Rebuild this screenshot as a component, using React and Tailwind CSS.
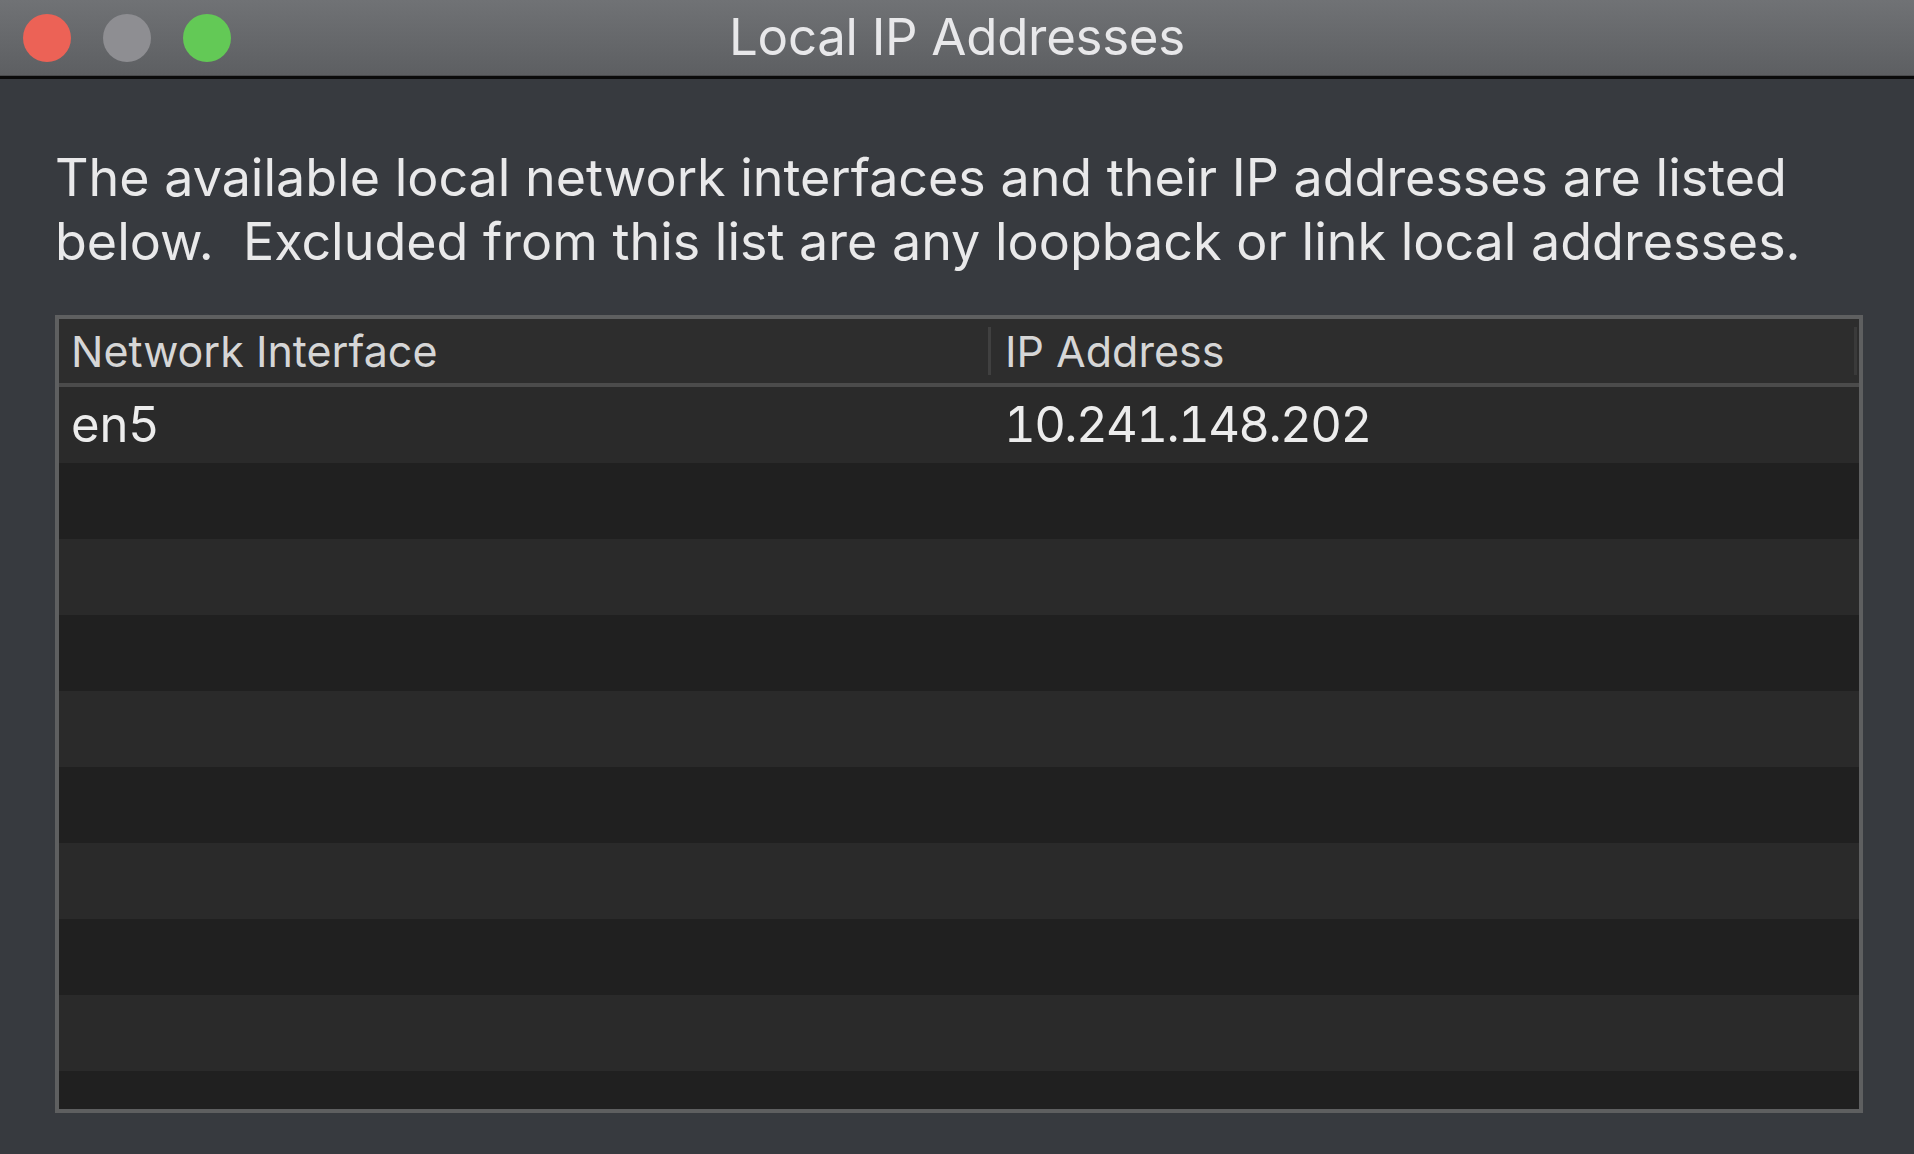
import React from "react";

const rows = Array.from({ length: 10 }, (_, i) => i);

export default function App() {
  return (
    <div
      className="w-[1914px] h-[1154px] bg-[#373a3f] flex flex-col overflow-hidden"
      style={{ fontFamily: "Inter, 'Liberation Sans', sans-serif" }}
    >
      {/* Title bar */}
      <div className="relative h-[75px] shrink-0 bg-gradient-to-b from-[#707275] to-[#5d5f62] flex items-center pl-[23px] gap-[32px]">
        <div className="w-[48px] h-[48px] rounded-full bg-[#ec6256]" />
        <div className="w-[48px] h-[48px] rounded-full bg-[#8e8e92]" />
        <div className="w-[48px] h-[48px] rounded-full bg-[#63c956]" />
        <div className="absolute inset-0 flex items-center justify-center pointer-events-none">
          <span className="text-[51px] leading-none text-[#e8e8ea] tracking-[-0.3px] -translate-y-[1px]">Local IP Addresses</span>
        </div>
      </div>
      <div className="h-px bg-[#4a4b4d] shrink-0" />
      <div className="h-[3px] bg-[#0b0b0b] shrink-0" />

      {/* Content */}
      <div className="flex-1 min-h-0 flex flex-col pl-[55px] pr-[51px] pt-[67px] pb-[41px]">
        <p className="text-[52px] leading-[64px] text-[#e9e9ea] whitespace-pre">
          {"The available local network interfaces and their IP addresses are listed\nbelow.  Excluded from this list are any loopback or link local addresses."}
        </p>

        <div className="mt-[41px] flex-1 min-h-0 border-[4px] border-[#5e5f60] flex flex-col overflow-hidden">
          {/* header */}
          <div className="h-[64px] shrink-0 bg-[#2d2d2d] flex items-center text-[43px] text-[#d6d6d6]">
            <div className="w-[929px] pl-[12px] flex items-center">Network Interface</div>
            <div className="w-[3px] h-[48px] bg-[#404040]" />
            <div className="flex-1 pl-[14px]">IP Address</div>
            <div className="w-[3px] h-[48px] bg-[#3a3a3a] mr-[2px]" />
          </div>
          <div className="h-[4px] bg-[#4b4b4b] shrink-0" />
          {/* rows */}
          <div className="flex-1 min-h-0 flex flex-col overflow-hidden">
            {rows.map((i) => (
              <div
                key={i}
                className={
                  "h-[76px] shrink-0 flex items-center text-[49px] text-[#ececec] " +
                  (i % 2 === 0 ? "bg-[#2a2a2a]" : "bg-[#202020]")
                }
              >
                {i === 0 && (
                  <>
                    <div className="w-[932px] pl-[12px]">en5</div>
                    <div className="flex-1 pl-[13px] tabular-nums tracking-[-1.6px]">10.241.148.202</div>
                  </>
                )}
              </div>
            ))}
          </div>
        </div>
      </div>
    </div>
  );
}
